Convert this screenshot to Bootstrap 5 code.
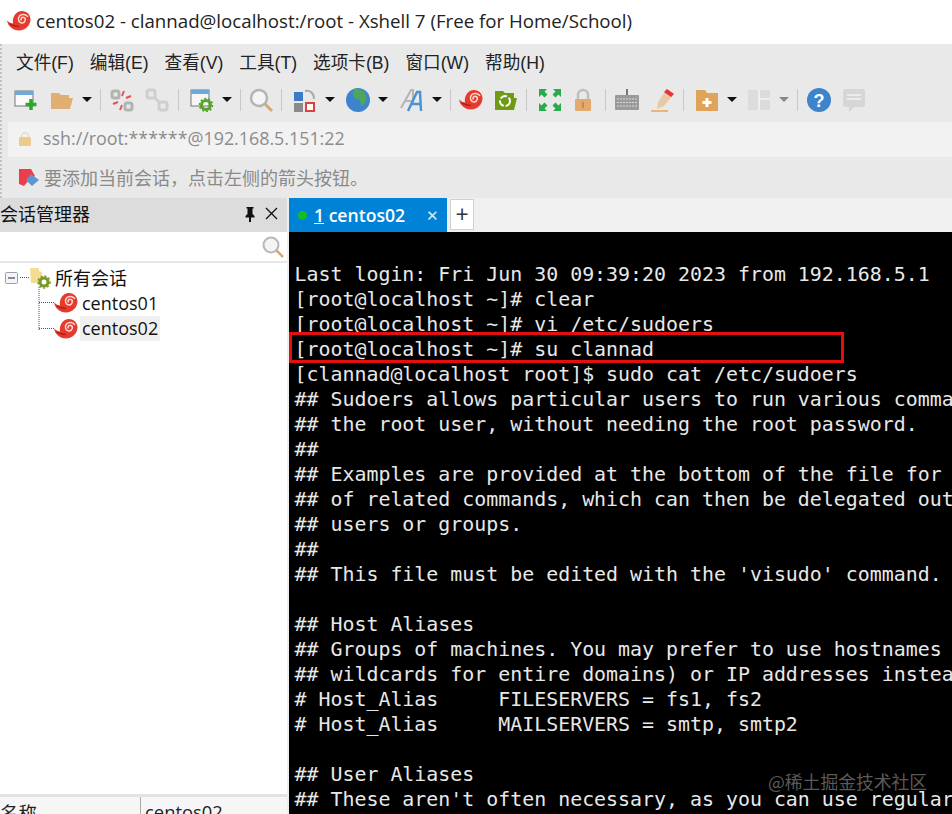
<!doctype html>
<html lang="zh"><head><meta charset="utf-8"><title>Xshell</title>
<link href="https://cdn.jsdelivr.net/npm/bootstrap@5.3.0/dist/css/bootstrap.min.css" rel="stylesheet">
<style>
html,body{margin:0;height:814px;overflow:hidden;background:#fff}
body{font-family:"Open Sans","Noto Sans CJK SC",sans-serif;color:#111}
.xs-app{width:952px;height:814px;display:flex;flex-direction:column}
.xs-title{height:44px;background:#fff;font-size:18.7px;padding:0 0 2px 7px;gap:5px;color:#222}
.xs-chrome{background:#e9e9e9;border-left:2px dotted #c4c4c4;height:154px}
.xs-menu{height:36px;padding:3px 0 0 14px;gap:16px;font-size:17.64px;color:#222;font-family:"Liberation Sans","Noto Sans CJK SC",sans-serif}
.xs-tools{height:42px;padding-left:12px;gap:8px;padding-bottom:3px}
.xs-ic{width:24px;height:24px;flex:none;display:block}
.xs-caret{width:0;height:0;flex:none;border-left:5px solid transparent;border-right:5px solid transparent;border-top:5px solid #111}
.xs-caret-off{border-top-color:#888}
.xs-sep{width:1px;height:22px;background:#c8c8c8;flex:none}
.xs-m1{margin-left:1px}.xs-m2{margin-left:2px}.xs-m3{margin-left:3px}.xs-m4{margin-left:4px}
.xs-addr{height:35px;margin:0 0 0 6px;background:#f2f2f2;padding:0 0 2px 10px;gap:11px;color:#8c8c8c;font-size:17.85px}
.xs-hint{height:41px;padding:0 0 0 16px;gap:4px;color:#8a8a8a;font-size:18px;font-family:"Noto Sans CJK SC",sans-serif}
.xs-main{flex:1;min-height:0}
.xs-left{width:287px;flex:none;background:#fff}
.xs-gut{width:2px;flex:none;background:#eee}
.xs-lhead{height:34px;background:#dcdcdc;font-size:18px;font-family:"Noto Sans CJK SC",sans-serif;color:#111;padding:0 9px 3px 0}
.xs-search{height:31px;border-bottom:2px solid #e6e6e6;padding-right:3px}
.xs-tree{position:relative;padding-top:2px;font-size:18px;color:#111}
.xs-row{height:25.5px;gap:4px}
.xs-row0{padding-left:30px;font-family:"Noto Sans CJK SC",sans-serif}
.xs-row1{padding-left:54px}
.xs-sel{background:#f0f0f0;padding:0 2px;margin-left:-2px;line-height:25px}
.xs-lines{position:absolute;left:0;top:0}
.xs-prop{height:20px;background:#f6f6f6;border-top:3px solid #e3e3e3;font-size:18.4px;line-height:30px;color:#222;overflow:hidden;flex:none}
.xs-pk{width:141px;border-right:1px solid #aaa;font-family:"Noto Sans CJK SC",sans-serif}
.xs-pv{padding-left:4px}
.xs-right{flex:1;min-width:0;position:relative}
.xs-tabs{height:34px;background:#f0f0f0;gap:3px}
.xs-tab{width:158px;background:#0083d7;color:#fff;font-weight:600;font-size:17.6px;padding-left:9px}
.xs-dot{width:9px;height:9px;border-radius:50%;background:#10c020;margin-right:7px;flex:none}
.xs-x{font-weight:400;margin-left:auto;margin-right:8px;font-size:15px;color:#d5ecfa}
.xs-plus{width:24px;height:31px;background:#fff;border:1px solid #d0d0d0;margin-top:1px;font-size:23px;line-height:1;color:#333}
.xs-term{position:relative;flex:1;background:#000;overflow:hidden}
.xs-term pre{margin:0;padding:30px 0 0 5.5px;font-family:"DejaVu Sans Mono",monospace;font-size:19.92px;line-height:25px;color:#e8e8e8;overflow:hidden;white-space:pre}
.xs-red{position:absolute;left:0;top:100px;width:555px;height:31px;border:3px solid #e60f0f}
.xs-mark{position:absolute;left:479px;top:536px;font-size:17.8px;color:#5a5a5a;font-family:"Noto Sans CJK SC",sans-serif}
</style></head><body>
<svg width="0" height="0" class="position-absolute">
<defs>
<symbol id="snail" viewBox="0 0 24 24"><path d="M0 11.500C2 13.500 4.500 14.500 6 14.500 5 8 9 2 15 2c5 0 8.500 4 8.500 8.500 0 5.500-5 11-11.500 11C5.500 21.500 1 17 0 11.500z" fill="#e63a2e"/><path d="M2.500 15c3 1.500 6 2.500 9.500 2.500" stroke="#b91f1a" stroke-width="1.500" fill="none"/><path d="M14.500 11.500c-1.500-1.500.5-4 2.500-3 2.300 1 1.500 5-1.500 5.500-3.500.5-5.500-4-3-7 2-2.500 7-2 8.500 1" stroke="#ffd9cf" stroke-width="1.500" fill="none"/></symbol>
</defs></svg>
<div class="xs-app">
<div class="xs-title d-flex align-items-center"><svg class="xs-ic"><use href="#snail"/></svg><span>centos02 - clannad@localhost:/root - Xshell 7 (Free for Home/School)</span></div>
<div class="xs-chrome">
<div class="xs-menu d-flex align-items-center"><span>文件(F)</span><span>编辑(E)</span><span>查看(V)</span><span>工具(T)</span><span>选项卡(B)</span><span>窗口(W)</span><span>帮助(H)</span></div>
<div class="xs-tools d-flex align-items-center">
<svg class="xs-ic" viewBox="0 0 24 24"><rect x="1" y="3" width="18" height="15" fill="#fafafa" stroke="#777"/><rect x="1" y="3" width="18" height="4" fill="#6ea8dc"/><path d="M17 11v11M11.500 16.500h11" stroke="#2aa82a" stroke-width="3.500"/></svg>
<svg class="xs-ic xs-m4" viewBox="0 0 24 24"><path d="M1 5h8l2 2h8v3h4l-3 11H1z" fill="#dfae70"/></svg>
<i class="xs-caret"></i><i class="xs-sep"></i>
<svg class="xs-ic xs-m1" viewBox="0 0 24 24"><g fill="none" stroke="#b3b3b3" stroke-width="3"><rect x="2" y="3" width="7" height="7" rx="2"/><rect x="15" y="15" width="7" height="7" rx="2"/></g><path d="M14 3l-2 5M21 8l-5 2M3 16l5-2M10 22l2-5" stroke="#e8505a" stroke-width="2"/></svg>
<svg class="xs-ic xs-m3" viewBox="0 0 24 24"><g fill="none" stroke="#cfcfcf" stroke-width="3"><rect x="2" y="2" width="8" height="8" rx="2"/><rect x="14" y="14" width="8" height="8" rx="2"/><path d="M9 9l6 6"/></g></svg>
<i class="xs-sep xs-m1"></i>
<svg class="xs-ic xs-m3" viewBox="0 0 24 24"><rect x="1" y="2" width="18" height="16" fill="#f6f6f6" stroke="#777"/><rect x="1" y="2" width="18" height="4" fill="#6ea8dc"/><circle cx="16" cy="17" r="4.500" fill="none" stroke="#55a32a" stroke-width="3"/><circle cx="16" cy="17" r="6.500" fill="none" stroke="#55a32a" stroke-width="1.500" stroke-dasharray="2 2"/></svg>
<i class="xs-caret"></i><i class="xs-sep"></i>
<svg class="xs-ic" viewBox="0 0 24 24"><circle cx="10" cy="10" r="8" fill="#f4f4f4" stroke="#b4b4b4" stroke-width="2.500"/><path d="M16 16l7 7" stroke="#d9a870" stroke-width="3"/></svg>
<i class="xs-sep"></i>
<svg class="xs-ic xs-m3" viewBox="0 0 24 24"><rect x="1" y="4" width="9" height="9" fill="#3a7cc7"/><rect x="1" y="15" width="9" height="9" fill="#8a8a8a"/><rect x="13" y="15" width="8" height="8" fill="#fff" stroke="#d9443f" stroke-width="2"/><path d="M12 3c5-1 9 2 9 8" fill="none" stroke="#aaa" stroke-width="2"/></svg>
<i class="xs-caret"></i>
<svg class="xs-ic xs-m3" viewBox="0 0 24 24"><circle cx="12" cy="12" r="12" fill="#3c85cd"/><path d="M8 1c5-1 9 1 11 4 2 4 2 7 0 10l-3 3c-2-2-1-6-4-7-3 0-5-2-5-5z" fill="#4da65a"/></svg>
<i class="xs-caret"></i>
<svg class="xs-ic xs-m4" viewBox="0 0 24 24"><path d="M1 20L11 2h2v14M5 13h7" fill="none" stroke="#b5b5b5" stroke-width="2"/><path d="M8 23L17 4h3l1 19M11.500 16h9" fill="none" stroke="#4c93d4" stroke-width="2.500"/></svg>
<i class="xs-caret"></i><i class="xs-sep"></i>
<svg class="xs-ic" viewBox="0 0 24 24"><use href="#snail"/></svg>
<svg class="xs-ic xs-m3" viewBox="0 0 24 24"><path d="M1 3h8l2 2h9v5h3l-3 12H1z" fill="#6f9a13"/><circle cx="11" cy="13" r="5" fill="none" stroke="#fff" stroke-width="2" stroke-dasharray="7 2"/></svg>
<i class="xs-sep"></i>
<svg class="xs-ic xs-m3" viewBox="0 0 24 24"><g fill="#27ac4b"><path d="M1 1h8L6.500 3.500l3 3-3 3-3-3L1 9zM23 1v8l-2.500-2.500-3 3-3-3 3-3L15 1zM1 23v-8l2.500 2.500 3-3 3 3-3 3L9 23zM23 23h-8l2.500-2.500-3-3 3-3 3 3L23 15z"/></g></svg>
<svg class="xs-ic xs-m1" viewBox="0 0 24 24"><path d="M7 11V7a5 5 0 0 1 10 0v4" fill="none" stroke="#bfbfbf" stroke-width="2.500"/><rect x="4" y="11" width="16" height="12" rx="1" fill="#e2ab6d"/><rect x="11" y="14" width="2" height="6" fill="#c58a4b"/></svg>
<i class="xs-sep xs-m2"></i>
<svg class="xs-ic xs-m1" viewBox="0 0 24 24"><path d="M12 1v7" stroke="#777" stroke-width="2"/><rect x="0" y="7" width="24" height="15" rx="1" fill="#9a9a9a"/><path d="M2 11h20M2 14.500h20M2 18h20" stroke="#d8d8d8" stroke-dasharray="2 1"/></svg>
<svg class="xs-ic xs-m3" viewBox="0 0 24 24"><path d="M17 1l7 5-10 12-7 3 1-7z" fill="#e8c9a5"/><path d="M17 1l7 5-3 3-7-5z" fill="#e2353a"/><path d="M1 23h17" stroke="#e8b873" stroke-width="2"/></svg>
<i class="xs-sep xs-m1"></i>
<svg class="xs-ic xs-m3" viewBox="0 0 24 24"><path d="M1 2h9l2 3h11v18H1z" fill="#e0a35a"/><path d="M12 10v9M7.500 14.500h9" stroke="#fff" stroke-width="3"/></svg>
<i class="xs-caret"></i>
<svg class="xs-ic xs-m2" viewBox="0 0 24 24"><rect x="1" y="2" width="22" height="20" fill="#dcdcdc"/><path d="M12 2v20M12 11h11" stroke="#f5f5f5" stroke-width="1.500"/></svg>
<i class="xs-caret xs-caret-off"></i><i class="xs-sep"></i>
<svg class="xs-ic xs-m1" viewBox="0 0 24 24"><circle cx="12" cy="12" r="12" fill="#3d84cc"/><text x="12" y="18.500" font-size="18" font-weight="700" text-anchor="middle" fill="#fff" font-family="Liberation Sans">?</text></svg>
<svg class="xs-ic xs-m3" viewBox="0 0 24 24"><path d="M3 1h18a2 2 0 0 1 2 2v14a2 2 0 0 1-2 2H12l-5 5v-5H3a2 2 0 0 1-2-2V3a2 2 0 0 1 2-2z" fill="#d6d6d6"/><path d="M5 7h14M5 11h14" stroke="#ececec" stroke-width="2"/></svg>
</div>
<div class="xs-addr d-flex align-items-center"><svg width="14" height="14" viewBox="0 0 14 14"><path d="M3.500 7V4.500a3.500 3.500 0 0 1 7 0V7" fill="none" stroke="#e8dcc0" stroke-width="1.500"/><rect x="1" y="5" width="12" height="9" rx="1.500" fill="#eccb8e"/></svg><span>ssh://root:******@192.168.5.151:22</span></div>
<div class="xs-hint d-flex align-items-center"><svg width="22" height="20" viewBox="0 0 22 20"><path d="M1 1h12l4 7-6 4-5 6-5-2z" fill="#ea3f4b"/><path d="M13 6l8 6-7 6-6-6z" fill="#5f95d0"/></svg><span>要添加当前会话，点击左侧的箭头按钮。</span></div>
</div>
<div class="xs-main d-flex">
<div class="xs-left d-flex flex-column">
<div class="xs-lhead d-flex align-items-center"><span class="me-auto">会话管理器</span>
<svg width="14" height="16" viewBox="0 0 14 16" class="me-2"><path d="M3.500 1h7v1.500h-1V8l2 2v1.500H8V16H6v-4.500H2.500V10l2-2V2.500h-1zM6 2.500h1V8H6z" fill="#111"/></svg>
<svg width="13" height="13" viewBox="0 0 13 13"><path d="M1 1l11 11M12 1L1 12" stroke="#111" stroke-width="1.300"/></svg></div>
<div class="xs-search d-flex align-items-center justify-content-end"><svg width="22" height="22" viewBox="0 0 22 22"><circle cx="9" cy="9" r="7.500" fill="#f4f4f4" stroke="#b8b8b8" stroke-width="2"/><path d="M14.500 14.500L21 21" stroke="#d9a870" stroke-width="2.500"/></svg></div>
<div class="xs-tree flex-grow-1">
<svg class="xs-lines" width="60" height="90"><path d="M20 14.500h10M39 24v43M39 39.500h15M39 65.500h15" stroke="#555" stroke-dasharray="1 1" fill="none"/><rect x="5.500" y="9.500" width="12" height="11" rx="1" fill="#f4f4f4" stroke="#9aa0aa"/><path d="M8 15h7" stroke="#39465a" stroke-width="1.200"/></svg>
<div class="xs-row xs-row0 d-flex align-items-center"><svg width="21" height="22" viewBox="0 0 21 22"><path d="M0 1h9v3l3 1v11H1z" fill="#f4dd93"/><circle cx="14" cy="15" r="4" fill="none" stroke="#7a9a28" stroke-width="3"/><circle cx="14" cy="15" r="6" fill="none" stroke="#7a9a28" stroke-width="1.500" stroke-dasharray="2 2"/></svg><span>所有会话</span></div>
<div class="xs-row xs-row1 d-flex align-items-center"><svg class="xs-ic"><use href="#snail"/></svg><span>centos01</span></div>
<div class="xs-row xs-row1 d-flex align-items-center"><svg class="xs-ic"><use href="#snail"/></svg><span class="xs-sel">centos02</span></div>
</div>
<div class="xs-prop d-flex"><div class="xs-pk">名称</div><div class="xs-pv">centos02</div></div>
</div>
<div class="xs-gut"></div>
<div class="xs-right d-flex flex-column">
<div class="xs-tabs d-flex"><div class="xs-tab d-flex align-items-center"><i class="xs-dot"></i><span><u>1</u> centos02</span><span class="xs-x">✕</span></div><div class="xs-plus d-flex align-items-center justify-content-center">+</div></div>
<div class="xs-term"><pre>Last login: Fri Jun 30 09:39:20 2023 from 192.168.5.1
[root@localhost ~]# clear
[root@localhost ~]# vi /etc/sudoers
[root@localhost ~]# su clannad
[clannad@localhost root]$ sudo cat /etc/sudoers
## Sudoers allows particular users to run various commands as
## the root user, without needing the root password.
##
## Examples are provided at the bottom of the file for collections
## of related commands, which can then be delegated out to particular
## users or groups.
##
## This file must be edited with the 'visudo' command.

## Host Aliases
## Groups of machines. You may prefer to use hostnames (perhaps using
## wildcards for entire domains) or IP addresses instead.
# Host_Alias     FILESERVERS = fs1, fs2
# Host_Alias     MAILSERVERS = smtp, smtp2

## User Aliases
## These aren't often necessary, as you can use regular groups</pre>
<div class="xs-red"></div>
<div class="xs-mark">@稀土掘金技术社区</div>
</div>
</div>
</div>
</div>
</body></html>
